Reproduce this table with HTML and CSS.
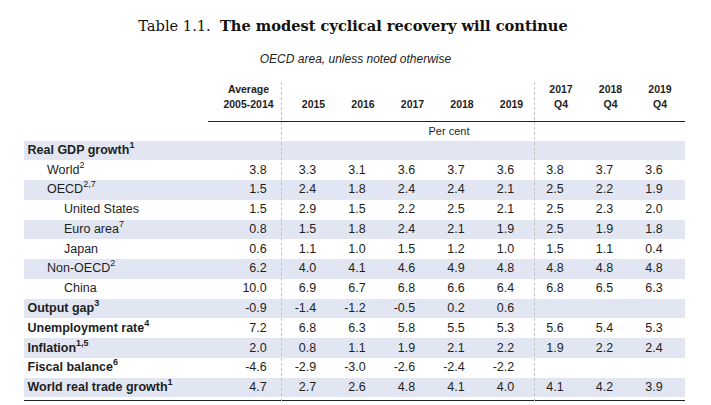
FILE: index.html
```html
<!DOCTYPE html>
<html>
<head>
<meta charset="utf-8">
<link rel="stylesheet" href="styles.css">
</head>
<body>
<div class="page">
  <h1 class="title">Table 1.1.&nbsp; <b>The modest cyclical recovery will continue</b></h1>
  <p class="subtitle">OECD area, unless noted otherwise</p>
  <div class="table">
    <div class="vline vline-a"></div>
    <div class="vline vline-b"></div>
    <div class="head">
      <div></div>
      <div class="hc">Average<br>2005-2014</div>
      <div class="hc">2015</div>
      <div class="hc">2016</div>
      <div class="hc">2017</div>
      <div class="hc">2018</div>
      <div class="hc">2019</div>
      <div class="hc">2017<br>Q4</div>
      <div class="hc">2018<br>Q4</div>
      <div class="hc">2019<br>Q4</div>
    </div>
    <div class="unit"><div></div><div class="unit-text">Per cent</div></div>

    <div class="row band"><div class="lab l0">Real GDP growth<sup>1</sup></div></div>
    <div class="row"><div class="lab l1">World<sup>2</sup></div><div class="num">3.8</div><div class="num">3.3</div><div class="num">3.1</div><div class="num">3.6</div><div class="num">3.7</div><div class="num">3.6</div><div class="num">3.8</div><div class="num">3.7</div><div class="num">3.6</div></div>
    <div class="row band"><div class="lab l1">OECD<sup>2,7</sup></div><div class="num">1.5</div><div class="num">2.4</div><div class="num">1.8</div><div class="num">2.4</div><div class="num">2.4</div><div class="num">2.1</div><div class="num">2.5</div><div class="num">2.2</div><div class="num">1.9</div></div>
    <div class="row"><div class="lab l2">United States</div><div class="num">1.5</div><div class="num">2.9</div><div class="num">1.5</div><div class="num">2.2</div><div class="num">2.5</div><div class="num">2.1</div><div class="num">2.5</div><div class="num">2.3</div><div class="num">2.0</div></div>
    <div class="row band"><div class="lab l2">Euro area<sup>7</sup></div><div class="num">0.8</div><div class="num">1.5</div><div class="num">1.8</div><div class="num">2.4</div><div class="num">2.1</div><div class="num">1.9</div><div class="num">2.5</div><div class="num">1.9</div><div class="num">1.8</div></div>
    <div class="row"><div class="lab l2">Japan</div><div class="num">0.6</div><div class="num">1.1</div><div class="num">1.0</div><div class="num">1.5</div><div class="num">1.2</div><div class="num">1.0</div><div class="num">1.5</div><div class="num">1.1</div><div class="num">0.4</div></div>
    <div class="row band"><div class="lab l1">Non-OECD<sup>2</sup></div><div class="num">6.2</div><div class="num">4.0</div><div class="num">4.1</div><div class="num">4.6</div><div class="num">4.9</div><div class="num">4.8</div><div class="num">4.8</div><div class="num">4.8</div><div class="num">4.8</div></div>
    <div class="row"><div class="lab l2">China</div><div class="num">10.0</div><div class="num">6.9</div><div class="num">6.7</div><div class="num">6.8</div><div class="num">6.6</div><div class="num">6.4</div><div class="num">6.8</div><div class="num">6.5</div><div class="num">6.3</div></div>
    <div class="row band"><div class="lab l0">Output gap<sup>3</sup></div><div class="num">-0.9</div><div class="num">-1.4</div><div class="num">-1.2</div><div class="num">-0.5</div><div class="num">0.2</div><div class="num">0.6</div></div>
    <div class="row"><div class="lab l0">Unemployment rate<sup>4</sup></div><div class="num">7.2</div><div class="num">6.8</div><div class="num">6.3</div><div class="num">5.8</div><div class="num">5.5</div><div class="num">5.3</div><div class="num">5.6</div><div class="num">5.4</div><div class="num">5.3</div></div>
    <div class="row band"><div class="lab l0">Inflation<sup>1,5</sup></div><div class="num">2.0</div><div class="num">0.8</div><div class="num">1.1</div><div class="num">1.9</div><div class="num">2.1</div><div class="num">2.2</div><div class="num">1.9</div><div class="num">2.2</div><div class="num">2.4</div></div>
    <div class="row"><div class="lab l0">Fiscal balance<sup>6</sup></div><div class="num">-4.6</div><div class="num">-2.9</div><div class="num">-3.0</div><div class="num">-2.6</div><div class="num">-2.4</div><div class="num">-2.2</div></div>
    <div class="row band"><div class="lab l0">World real trade growth<sup>1</sup></div><div class="num">4.7</div><div class="num">2.7</div><div class="num">2.6</div><div class="num">4.8</div><div class="num">4.1</div><div class="num">4.0</div><div class="num">4.1</div><div class="num">4.2</div><div class="num">3.9</div></div>
    <div class="bottom-rule"></div>
  </div>
</div>
</body>
</html>
```
FILE: styles.css
```css
* { box-sizing: border-box; }
body {
  margin: 0;
  background: #fff;
  font-family: "Liberation Sans", Arial, sans-serif;
  color: #1e1e1e;
}
.page { padding-top: 14.5px; }
.title {
  margin: 0;
  padding-right: 5px;
  font-family: "DejaVu Serif", serif;
  font-weight: normal;
  font-size: 14.6px;
  line-height: 22px;
  text-align: center;
  color: #111;
}
.title b { font-weight: bold; }
.subtitle {
  margin: 15.5px 0 0;
  font-style: italic;
  font-size: 12px;
  line-height: 14px;
  text-align: center;
  color: #222;
}
.table {
  position: relative;
  margin: 15.5px 0 0 24px;
  width: 660.75px;
}
.head, .unit, .row {
  display: grid;
  grid-template-columns: 184.25px 80.5px repeat(8, 49.5px);
}
.head {
  align-items: end;
  font-weight: bold;
  font-size: 10.5px;
  line-height: 15px;
}
.hc {
  text-align: center;
  padding-bottom: 9.5px;
  border-bottom: 1.5px solid #222;
}
.unit { height: 18.5px; align-items: center; font-size: 11px; }
.unit-text { grid-column: 2 / -1; text-align: center; padding-left: 5px; }
.row {
  height: 19.77px;
  align-items: center;
  font-size: 12.5px;
  line-height: 15px;
}
.band { background: #e1e6f2; }
.lab { white-space: nowrap; }
.l0 { font-weight: bold; padding-left: 3.5px; }
.l1 { padding-left: 23px; }
.l2 { padding-left: 40px; }
.num { text-align: right; padding-right: 22px; }
sup {
  font-size: 9px;
  line-height: 0;
  vertical-align: 6px;
}
.bottom-rule {
  margin-top: 2.5px;
  height: 1.5px;
  background: #222;
}
.vline {
  position: absolute;
  top: 0.5px;
  bottom: 0;
  width: 0;
  border-left: 1px dashed #c4c4c4;
}
.vline-a { left: 257px; }
.vline-b { left: 510px; }
```
